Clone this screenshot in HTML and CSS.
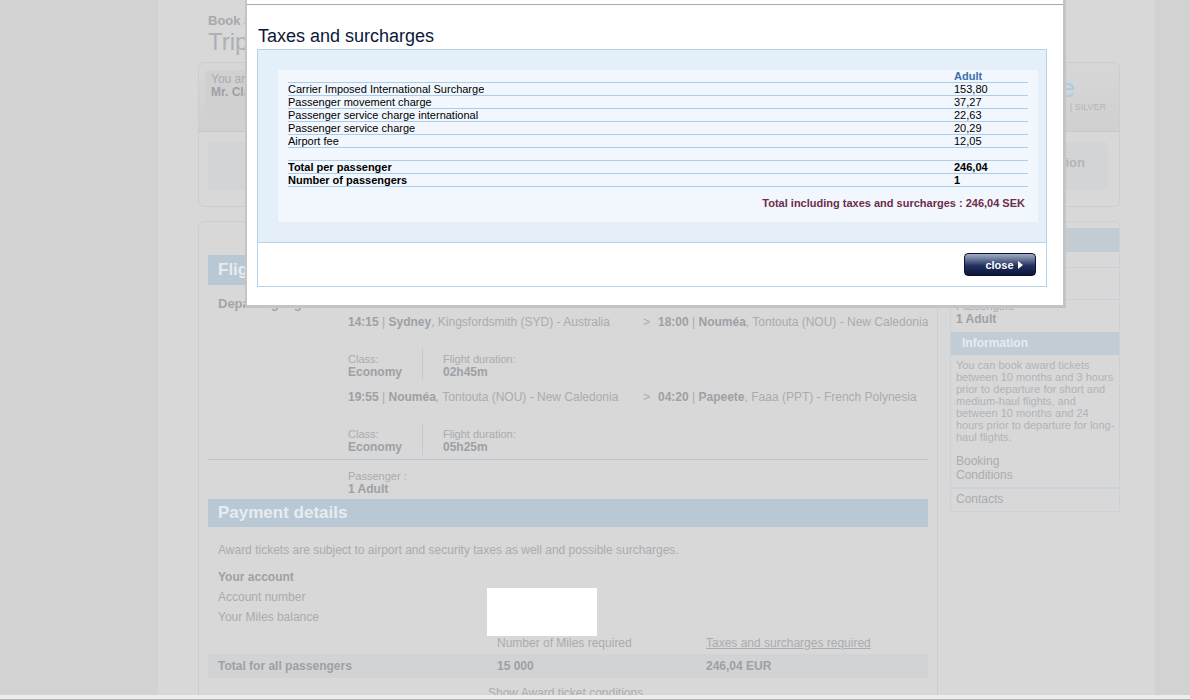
FILE: index.html
```html
<!DOCTYPE html>
<html lang="en">
<head>
    <meta charset="UTF-8">
    <meta name="viewport" content="width=device-width, initial-scale=1.0">
    <title>Trip summary</title>

    <link rel="stylesheet" href="styles.css">
</head>
<body>

    <div class="page">
        <header class="head">
            <p class="crumb">Book an award ticket</p>
            <h1>Trip summary</h1>
        </header>

        <section class="account-card">
            <div class="account-top">
                <div class="login">
                    <p>You are logged in as</p>
                    <p class="strong">Mr. Claude Martin</p>
                </div>
                <div class="logo">
                    <span class="logo-name">Blue</span>
                    <span class="logo-tier">| SILVER</span>
                </div>
            </div>
            <div class="account-bottom">
                <div class="notice">Reservation</div>
            </div>
        </section>

        <div class="columns">
            <main class="main-card">
                <h2 class="bar">Flight details</h2>

                <div class="trip">
                    <p class="trip-label">Departing flight</p>
                    <div class="legs">
                        <div class="segment">
                            <div class="leg">
                                <span class="from"><b>14:15</b> | <b>Sydney</b>, Kingsfordsmith (SYD) - Australia</span>
                                <span class="arrow">&gt;</span>
                                <span class="to"><b>18:00</b> | <b>Nouméa</b>, Tontouta (NOU) - New Caledonia</span>
                            </div>
                            <div class="leg-info">
                                <div class="cabin"><p class="small">Class:</p><p class="strong">Economy</p></div>
                                <div class="duration"><p class="small">Flight duration:</p><p class="strong">02h45m</p></div>
                            </div>
                        </div>
                        <div class="segment">
                            <div class="leg">
                                <span class="from"><b>19:55</b> | <b>Nouméa</b>, Tontouta (NOU) - New Caledonia</span>
                                <span class="arrow">&gt;</span>
                                <span class="to"><b>04:20</b> | <b>Papeete</b>, Faaa (PPT) - French Polynesia</span>
                            </div>
                            <div class="leg-info">
                                <div class="cabin"><p class="small">Class:</p><p class="strong">Economy</p></div>
                                <div class="duration"><p class="small">Flight duration:</p><p class="strong">05h25m</p></div>
                            </div>
                        </div>
                    </div>
                </div>

                <div class="passenger">
                    <p class="small">Passenger :</p>
                    <p class="strong">1 Adult</p>
                </div>

                <h2 class="bar bar-pay">Payment details</h2>

                <div class="pay-body">
                    <p class="note">Award tickets are subject to airport and security taxes as well and possible surcharges.</p>

                    <div class="account">
                        <div class="account-labels">
                            <p class="strong">Your account</p>
                            <p>Account number</p>
                            <p>Your Miles balance</p>
                        </div>
                        <div class="masked"></div>
                    </div>

                    <div class="pay-row pay-head">
                        <span></span>
                        <span>Number of Miles required</span>
                        <a href="#" class="link">Taxes and surcharges required</a>
                    </div>
                    <div class="pay-row pay-total">
                        <span>Total for all passengers</span>
                        <span>15 000</span>
                        <span>246,04 EUR</span>
                    </div>

                    <p class="conditions">Show Award ticket conditions</p>
                </div>
            </main>

            <aside class="side-card">
                <div class="side-bar"></div>
                <div class="side-row row-one"></div>
                <div class="side-row row-two"></div>
                <div class="side-row row-three">
                    <p class="small">Passengers</p>
                    <p class="strong">1 Adult</p>
                </div>
                <h3 class="side-bar">Information</h3>
                <div class="side-row row-info">
                    <p class="info-text">You can book award tickets between 10 months and 3 hours prior to departure for short and medium-haul flights, and between 10 months and 24 hours prior to departure for long-haul flights.</p>
                    <p class="booking">Booking<br>Conditions</p>
                </div>
                <div class="side-row row-contacts">Contacts</div>
            </aside>
        </div>
    </div>

    <div class="modal">
        <div class="modal-top"></div>
        <h2 class="modal-title">Taxes and surcharges</h2>
        <div class="panel">
            <div class="panel-body">
                <div class="sheet">
                    <table class="taxes">
                        <tr class="th"><td></td><td>Adult</td></tr>
                        <tr><td>Carrier Imposed International Surcharge</td><td>153,80</td></tr>
                        <tr><td>Passenger movement charge</td><td>37,27</td></tr>
                        <tr><td>Passenger service charge international</td><td>22,63</td></tr>
                        <tr><td>Passenger service charge</td><td>20,29</td></tr>
                        <tr><td>Airport fee</td><td>12,05</td></tr>
                        <tr><td>&nbsp;</td><td></td></tr>
                        <tr class="bold"><td>Total per passenger</td><td>246,04</td></tr>
                        <tr class="bold"><td>Number of passengers</td><td>1</td></tr>
                    </table>
                    <p class="grand">Total including taxes and surcharges : 246,04 SEK</p>
                </div>
            </div>
            <div class="panel-foot">
                <button class="close">close<span class="tri"></span></button>
            </div>
        </div>
    </div>

    <div class="window-edge"></div>

</body>
</html>
```

FILE: styles.css
```css
html, body {
    margin: 0;
    overflow: hidden;
}

body {
    background-color: #d2d2d2;
    font-family: "Liberation Sans", Arial, sans-serif;
    color: #a8acb0;
    font-size: 12px;
}

p, h1, h2, h3 {
    margin: 0;
}

.strong, b {
    font-weight: bold;
    color: #9da1a5;
}

.small {
    font-size: 11px;
    line-height: 12px;
}

/* page behind the modal */
.page {
    margin-left: 158px;
    width: 997px;
    min-height: 700px;
    box-sizing: border-box;
    padding: 13px 35px 0 40px;
    background-color: #d8d8d8;
}

.head {
    padding-left: 10px;
}

.crumb {
    font-size: 13px;
    line-height: 15px;
    font-weight: bold;
    color: #a5a9ad;
}

h1 {
    font-size: 24px;
    line-height: 28px;
    font-weight: normal;
    color: #acb1b6;
}

.account-card {
    margin-top: 6px;
    border: 1px solid #cdcdcd;
    border-radius: 6px;
}

.account-top {
    display: flex;
    justify-content: space-between;
    padding: 7px 13px 13px 6px;
    border-bottom: 1px dotted #bcbcbc;
    background: linear-gradient(#d7d7d7, #d0d0d0);
    border-radius: 6px 6px 0 0;
}

.login {
    width: 300px;
    height: 48px;
    box-sizing: border-box;
    padding: 3px 6px;
    background-color: #d0d0d0;
    border-radius: 5px;
    font-size: 12px;
    line-height: 13px;
}

.logo {
    display: flex;
    flex-direction: column;
    align-items: flex-end;
    margin-top: 4px;
}

.logo-name {
    font-size: 26px;
    line-height: 28px;
    color: #a8cee3;
    margin-right: 31px;
}

.logo-tier {
    font-size: 9px;
    line-height: 11px;
    color: #b5b5b5;
}

.account-bottom {
    padding: 10px 11px 16px 9px;
}

.notice {
    height: 48px;
    box-sizing: border-box;
    padding: 13px 23px 0 0;
    text-align: right;
    font-size: 13px;
    line-height: 16px;
    font-weight: bold;
    color: #b3b5b8;
    background-color: #d3d4d6;
    border-radius: 4px;
}

.columns {
    display: flex;
    gap: 12px;
    margin-top: 14px;
    align-items: flex-start;
}

.main-card {
    width: 740px;
    box-sizing: border-box;
    min-height: 500px;
    padding: 33px 9px 0;
    border: 1px solid #cdcdcd;
    border-radius: 6px 6px 0 0;
}

.bar {
    height: 30px;
    line-height: 30px;
    padding-left: 10px;
    font-size: 17px;
    color: #e7ecef;
    background-color: #b8c8d4;
}

.bar-pay {
    height: 28px;
    line-height: 28px;
    margin-top: 2px;
}

.trip {
    display: grid;
    grid-template-columns: 140px 1fr;
    padding-bottom: 4px;
    border-bottom: 1px solid #b9c8d6;
}

.trip-label {
    padding: 11px 0 0 10px;
    font-size: 13px;
    line-height: 16px;
    font-weight: bold;
    color: #a2a6aa;
}

.legs {
    padding-top: 30px;
    overflow: hidden;
}

.segment {
    margin-bottom: 10px;
}

.segment:last-child {
    margin-bottom: 0;
}

.leg {
    display: flex;
    white-space: nowrap;
    line-height: 15px;
}

.from {
    width: 295px;
    flex: none;
}

.arrow {
    width: 15px;
    flex: none;
}

.leg-info {
    display: flex;
    margin-top: 18px;
    height: 32px;
}

.cabin {
    width: 74px;
    padding-top: 5px;
}

.duration {
    padding: 5px 0 0 20px;
    border-left: 1px solid #c2c9d0;
}

.leg-info .strong, .passenger .strong {
    line-height: 15px;
}

.passenger {
    padding: 10px 0 0 140px;
}

.pay-body {
    padding: 0 10px;
}

.note {
    margin-top: 16px;
    line-height: 15px;
}

.account {
    display: flex;
    margin-top: 9px;
}

.account-labels {
    width: 269px;
    line-height: 20px;
}

.masked {
    width: 110px;
    height: 48px;
    margin-top: 21px;
    background-color: #ffffff;
}

.pay-row {
    display: grid;
    grid-template-columns: 279px 209px 1fr;
}

.pay-head {
    height: 18px;
    line-height: 15px;
}

.link {
    color: #a8acb0;
}

.pay-total {
    margin: 0 -10px;
    padding-left: 10px;
    height: 24px;
    line-height: 24px;
    font-weight: bold;
    color: #9da1a5;
    background-color: #d2d3d5;
}

.conditions {
    margin-top: 8px;
    padding-left: 270px;
    line-height: 15px;
}

/* sidebar */
.side-card {
    width: 170px;
    box-sizing: border-box;
    padding-top: 6px;
    border: 1px solid #c9d2da;
    border-radius: 5px 5px 0 0;
}

.side-bar {
    height: 24px;
    line-height: 24px;
    padding-left: 11px;
    font-size: 12px;
    color: #e6ebee;
    background-color: #c1ccd5;
}

h3.side-bar {
    height: 23px;
    line-height: 23px;
}

.side-row {
    padding: 0 5px;
    border-bottom: 1px solid #c9d2da;
}

.row-one {
    height: 15px;
}

.row-two {
    height: 31px;
}

.row-three .strong {
    line-height: 15px;
}

.row-three {
    padding-bottom: 5px;
    border-bottom: none;
}

.row-info {
    padding-top: 4px;
    padding-bottom: 5px;
    border-bottom: 2px solid #c9d2da;
}

.info-text {
    width: 160px;
    font-size: 11px;
    line-height: 12px;
    color: #b0b4b8;
}

.booking {
    margin-top: 11px;
    line-height: 14px;
    color: #a9adb1;
}

.row-contacts {
    padding-top: 3px;
    padding-bottom: 4px;
    line-height: 15px;
    border-bottom: none;
}

/* modal */
.modal {
    position: fixed;
    top: 0;
    left: 245px;
    width: 816px;
    padding-bottom: 18px;
    background-color: #ffffff;
    border-style: solid;
    border-color: #c4c4c4;
    border-width: 0 3px 3px 2px;
}

.modal-top {
    height: 4px;
    border-bottom: 1px solid #a9a9a9;
}

.modal-title {
    margin: 20px 0 2px 11px;
    font-size: 18px;
    line-height: 22px;
    font-weight: normal;
    color: #0b1838;
}

.panel {
    width: 790px;
    box-sizing: border-box;
    margin-left: 10px;
    border: 1px solid #b4d3ec;
}

.panel-body {
    padding: 20px 0;
    background-color: #e4eff9;
    border-bottom: 1px solid #b4d3ec;
}

.sheet {
    width: 760px;
    margin-left: 20px;
    background-color: #f2f7fd;
}

.taxes {
    width: 740px;
    margin: 0 10px;
    border-collapse: collapse;
    font-size: 11px;
    color: #000000;
}

.taxes td {
    padding: 0;
    height: 12px;
    line-height: 12px;
    border-bottom: 1px solid #a9cdec;
}

.taxes td:first-child {
    width: 666px;
}

.taxes .th td {
    font-weight: bold;
    color: #3b70ae;
}

.taxes .bold td {
    font-weight: bold;
}

.grand {
    margin: 9px 13px 0 0;
    padding-bottom: 12px;
    text-align: right;
    font-size: 11px;
    line-height: 14px;
    font-weight: bold;
    color: #6c2d4d;
}

.panel-foot {
    padding: 10px;
    text-align: right;
    background-color: #ffffff;
}

.close {
    display: inline-flex;
    align-items: center;
    justify-content: center;
    gap: 4px;
    width: 72px;
    height: 23px;
    padding: 0 0 0 8px;
    vertical-align: top;
    font-family: "Liberation Sans", Arial, sans-serif;
    font-size: 11px;
    font-weight: bold;
    color: #ffffff;
    border: 1px solid #0b1233;
    border-radius: 4px;
    background: linear-gradient(#a3afc5 0%, #6a7898 25%, #243260 55%, #0b1339 100%);
}

.tri {
    width: 0;
    height: 0;
    border-left: 5px solid #ffffff;
    border-top: 4px solid transparent;
    border-bottom: 4px solid transparent;
}

.window-edge {
    position: fixed;
    left: 0;
    right: 0;
    bottom: 0;
    height: 4px;
    background-color: #ececec;
    border-bottom: 1px solid #b3b3b3;
}
```
